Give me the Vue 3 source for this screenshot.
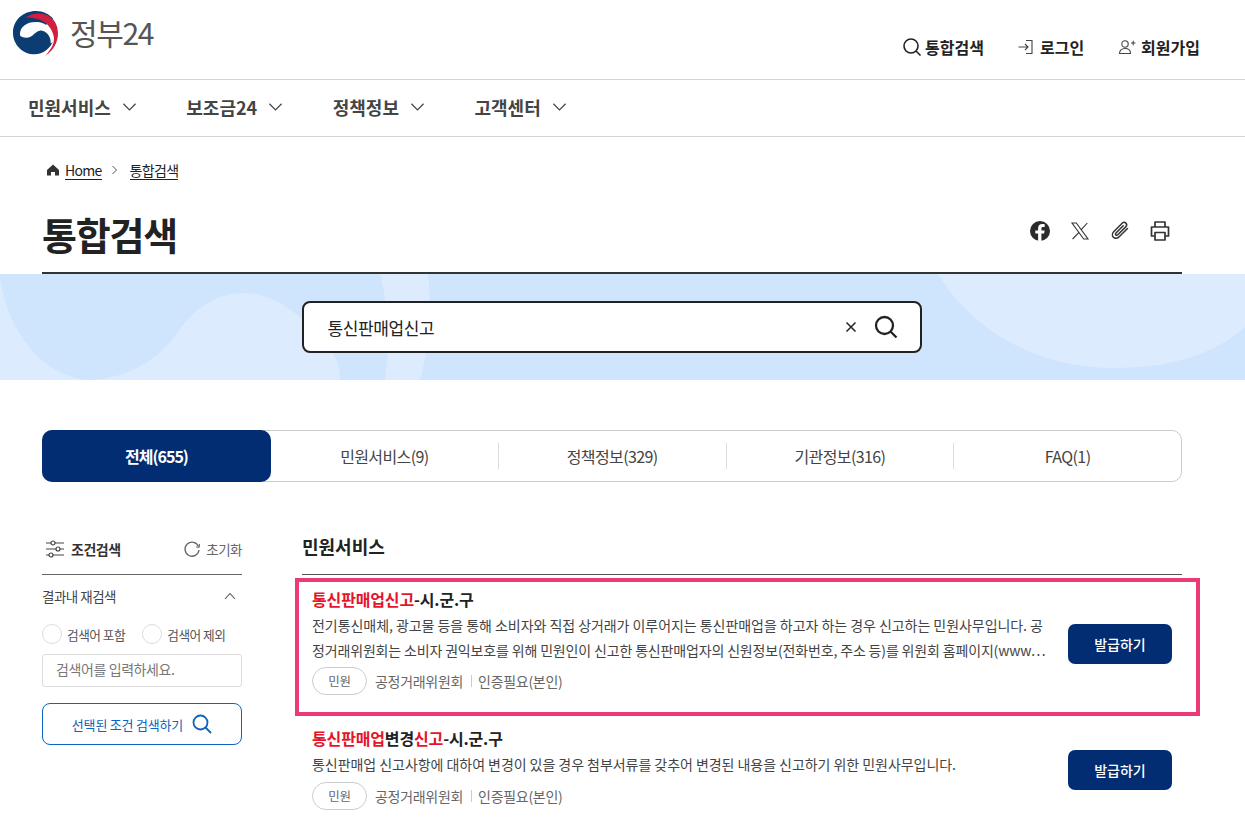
<script setup>
const navItems = ['민원서비스', '보조금24', '정책정보', '고객센터']
const tabs = ['전체(655)', '민원서비스(9)', '정책정보(329)', '기관정보(316)', 'FAQ(1)']
const results = [
  {
    id: 1,
    title: [['통신판매업신고', true], ['-시.군.구', false]],
    lines: [
      '전기통신매체, 광고물 등을 통해 소비자와 직접 상거래가 이루어지는 통신판매업을 하고자 하는 경우 신고하는 민원사무입니다. 공',
      '정거래위원회는 소비자 권익보호를 위해 민원인이 신고한 통신판매업자의 신원정보(전화번호, 주소 등)를 위원회 홈페이지(www…'
    ],
    picked: true
  },
  {
    id: 2,
    title: [['통신판매업', true], ['변경', false], ['신고', true], ['-시.군.구', false]],
    lines: ['통신판매업 신고사항에 대하여 변경이 있을 경우 첨부서류를 갖추어 변경된 내용을 신고하기 위한 민원사무입니다.'],
    picked: false
  }
]
</script>

<template>
  <div class="page">
    <header class="top">
      <div class="logo">
        <svg class="mark" viewBox="0 0 180 162" width="60" height="54">
          <path d="M15 80C15 42 46 15 84 15c21 0 41 10 51 23l-25 22 28 40c-10 28-33 45-58 45-36 0-65-29-65-65z" fill="#0b3d72"/>
          <path d="M36 88C34 60 60 46 88 48c30 2 50 27 50 54-2 6-6 10-10 10 2-22-16-40-33-38-15 2-20 21-40 21-10 0-17-3-19-7z" fill="#fff"/>
          <path d="M52 35C85 10 150 20 150 82c0 28-15 53-38 67 16-19 27-34 26-54-4-30-28-53-53-57-13-2-23-4-33-3z" fill="#d1203f"/>
        </svg>
        <span class="logo-text">정부24</span>
      </div>
      <nav class="util">
        <a class="util-link">
          <svg width="20" height="20" viewBox="0 0 20 20" fill="none" stroke="#222" stroke-width="1.600"><circle cx="9" cy="9" r="7"/><path d="M14 14l4.500 4.500"/></svg>
          <span>통합검색</span>
        </a>
        <a class="util-link login">
          <svg width="18" height="18" viewBox="0 0 18 18" fill="none" stroke="#444" stroke-width="1.100"><path d="M9 2.500h6v13H9M1.500 9H11M8 6l3 3-3 3"/></svg>
          <span>로그인</span>
        </a>
        <a class="util-link join">
          <svg width="18" height="18" viewBox="0 0 18 18" fill="none" stroke="#444" stroke-width="1.100"><circle cx="7" cy="6" r="3.200"/><path d="M1.500 15.500c0-3 2-5 5.500-5s5.500 2 5.500 5zM13 5h4.500M15.200 2.800v4.400"/></svg>
          <span>회원가입</span>
        </a>
      </nav>
    </header>

    <nav class="gnb">
      <a v-for="item in navItems" :key="item" class="gnb-item">
        <span>{{ item }}</span>
        <svg width="15" height="10" viewBox="0 0 16 10" fill="none" stroke="#444" stroke-width="1.300"><path d="M1.500 1.500L8 8l6.500-6.500"/></svg>
      </a>
    </nav>

    <div class="wrap">
      <div class="crumbs">
        <svg width="14" height="14" viewBox="0 0 14 14" fill="#333"><path d="M7 1.500L1 7v5.500h4V9h4v3.500h4V7z"/></svg>
        <a class="crumb">Home</a>
        <svg width="8" height="10" viewBox="0 0 8 10" fill="none" stroke="#555" stroke-width="1"><path d="M1.500 1l4 4-4 4"/></svg>
        <a class="crumb">통합검색</a>
      </div>
      <div class="head">
        <h1>통합검색</h1>
        <div class="share">
          <svg width="22" height="22" viewBox="0 0 22 22"><circle cx="11" cy="11" r="10" fill="#2b2b2b"/><path d="M12.400 21v-7.500h2.700l.5-3.100h-3.200V8.500c0-.9.400-1.600 1.700-1.600h1.600V4.200c-.8-.1-1.600-.2-2.400-.2-2.600 0-4.200 1.500-4.200 4.200v2.200H6.300v3.100h2.800V21z" fill="#fff"/></svg>
          <svg width="22" height="20" viewBox="-1 0 22 20" fill="none" stroke="#333" stroke-width="1.100"><path d="M2 2h4.300l11.700 16h-4.300zM17.300 2l-6.500 7.200M9 11.300L2.600 18"/></svg>
          <svg width="22" height="22" viewBox="0 0 22 22" fill="none" stroke="#333" stroke-width="1.500" stroke-linecap="round"><path d="M18.500 8.500l-8.300 8.300c-1.700 1.700-4.300 2-5.800.5s-1.200-4.100.5-5.800l8-8c1.200-1.200 3-1.400 4-.4s.8 2.800-.4 4l-7.700 7.700c-.6.600-1.500.7-2 .2s-.4-1.400.2-2l7.200-7.200"/></svg>
          <svg width="22" height="22" viewBox="0 0 22 22" fill="none" stroke="#333" stroke-width="1.700" stroke-linejoin="round"><path d="M6 7V2h10v5M6 16H2.500V7h17v9H16"/><path d="M6 12.500h10V20H6z"/></svg>
        </div>
      </div>
    </div>

    <section class="banner">
      <svg class="banner-art" viewBox="0 0 1245 106" preserveAspectRatio="none">
        <path d="M0 0C4 50 40 104 90 106H0z" fill="#dcebfd"/>
        <path d="M90 106c40-2 70-21 90-51 15-20 35-36 65-36 35 0 65 31 85 56 10 13 10 25 10 31z" fill="#dcebfd"/>
        <path d="M380 0h48c4 30 0 80-8 106h-35c5-36 3-76-5-106z" fill="#dcebfd"/>
        <path d="M938 0c37 60 102 94 177 94 55 0 100-14 130-41V0z" fill="#dcebfd"/>
      </svg>
      <div class="searchbox">
        <span class="query">통신판매업신고</span>
        <svg class="clear" width="12" height="12" viewBox="0 0 12 12" fill="none" stroke="#222" stroke-width="1.500"><path d="M1.500 1.500l9 9M10.500 1.500l-9 9"/></svg>
        <svg width="24" height="24" viewBox="0 0 24 24" fill="none" stroke="#222" stroke-width="2.300"><circle cx="10.500" cy="10.500" r="8.500"/><path d="M16.500 16.500l6 6"/></svg>
      </div>
    </section>

    <div class="wrap">
      <div class="tabs">
        <a v-for="(t, i) in tabs" :key="t" class="tab" :class="{ on: i === 0 }"><span>{{ t }}</span></a>
      </div>

      <div class="columns">
        <aside class="side">
          <div class="side-head">
            <svg width="20" height="20" viewBox="0 0 20 20" fill="none" stroke="#444" stroke-width="1.200"><path d="M1 4h5M10 4h9M1 10h10M15 10h4M1 16h3M8 16h11"/><circle cx="8" cy="4" r="2"/><circle cx="13" cy="10" r="2"/><circle cx="6" cy="16" r="2"/></svg>
            <strong>조건검색</strong>
            <span class="reset">
              <svg width="18" height="18" viewBox="0 0 18 18" fill="none" stroke="#666" stroke-width="1.300"><path d="M15.500 6.500A7 7 0 1 0 16 10"/><path d="M13 7l3.300.3.200-3.300" stroke-width="1"/></svg>
              초기화
            </span>
          </div>
          <div class="re-head">
            <span>결과내 재검색</span>
            <svg width="12" height="8" viewBox="0 0 12 8" fill="none" stroke="#555" stroke-width="1.100"><path d="M1 7l5-5.500L11 7"/></svg>
          </div>
          <div class="radios">
            <label class="radio"><i></i>검색어 포함</label>
            <label class="radio"><i></i>검색어 제외</label>
          </div>
          <div class="field">검색어를 입력하세요.</div>
          <button class="apply">
            선택된 조건 검색하기
            <svg width="20" height="20" viewBox="0 0 20 20" fill="none" stroke="#0b64c0" stroke-width="1.800"><circle cx="8.500" cy="8.500" r="7"/><path d="M13.500 13.500l5.500 5.500"/></svg>
          </button>
        </aside>

        <main class="main">
          <h2>민원서비스</h2>
          <ul class="list">
            <li v-for="r in results" :key="r.id" class="item" :class="{ picked: r.picked }">
              <div class="body">
                <div class="title"><span v-for="(p, i) in r.title" :key="i" :class="{ hit: p[1] }">{{ p[0] }}</span></div>
                <div class="desc"><div v-for="l in r.lines" :key="l">{{ l }}</div></div>
                <div class="meta">
                  <span class="pill">민원</span>
                  <span>공정거래위원회</span>
                  <span class="sep">인증필요(본인)</span>
                </div>
              </div>
              <button class="issue">발급하기</button>
            </li>
          </ul>
        </main>
      </div>
    </div>
  </div>
</template>

<style>
html, body { margin: 0; background: #fff; }
</style>

<style scoped>
.page {
  height: 827px;
  overflow: hidden;
  font-family: "Noto Sans CJK KR", "Noto Sans", sans-serif;
  color: #222;
  letter-spacing: -0.5px;
}
.top {
  height: 79px;
  border-bottom: 1px solid #d4d4d4;
  display: flex;
  justify-content: space-between;
  padding: 0 45px 0 8px;
}
.logo { display: flex; align-items: center; gap: 2px; height: 66px; }
.mark { display: block; }
.logo-text { font-size: 30px; color: #555; letter-spacing: -1.4px; line-height: 1; margin-top: -3px; }
.util { display: flex; align-items: center; height: 94px; }
.util-link { display: flex; align-items: center; gap: 5px; font-size: 16px; font-weight: 700; color: #222; letter-spacing: 0; }
.util-link:first-child { gap: 3px; }
.login { margin-left: 33px; }
.join { margin-left: 34px; }
.gnb {
  height: 57px;
  box-sizing: border-box;
  border-bottom: 1px solid #d4d4d4;
  padding: 0 0 2px 28px;
  display: flex;
  gap: 49.500px;
  align-items: center;
}
.gnb-item { display: flex; align-items: center; gap: 11px; font-size: 18px; font-weight: 700; color: #444; letter-spacing: 0; }
.wrap { margin: 0 63px 0 42px; }
.crumbs { display: flex; align-items: center; gap: 5px; height: 24px; margin: 21px 0 0 4px; font-size: 14px; letter-spacing: -0.7px; }
.crumb { border-bottom: 1px solid #222; line-height: 18px; margin-right: 4px; }
.crumbs svg:nth-of-type(2) { margin-right: 6px; }
.head { display: flex; justify-content: space-between; align-items: center; height: 77px; padding-top: 13px; border-bottom: 2px solid #333; }
h1 { margin: 0; font-size: 38px; font-weight: 700; letter-spacing: -1.2px; color: #222; }
.share { display: flex; align-items: center; gap: 18px; margin-right: 11px; margin-top: -6px; }
.banner {
  position: relative;
  height: 106px;
  background: #cfe5fe;
  display: flex;
  justify-content: center;
  align-items: flex-start;
  overflow: hidden;
}
.banner-art { position: absolute; inset: 0; width: 100%; height: 100%; }
.searchbox {
  position: relative;
  width: 620px;
  height: 52px;
  margin-top: 27px;
  margin-left: -22px;
  box-sizing: border-box;
  background: #fff;
  border: 2px solid #222;
  border-radius: 8px;
  display: flex;
  align-items: center;
  padding: 0 22px 0 24px;
}
.query { flex: 1; font-size: 17px; letter-spacing: -0.4px; }
.clear { margin-right: 17px; }
.tabs {
  margin-top: 50px;
  height: 52px;
  box-sizing: border-box;
  border: 1px solid #ccc;
  border-radius: 10px;
  display: flex;
  align-items: center;
}
.tab { flex: 1; font-size: 16px; color: #444; text-align: center; position: relative; height: 26px; line-height: 26px; letter-spacing: -0.6px; }
.tab + .tab { border-left: 1px solid #ddd; }
.tab:nth-child(2) { border-left: 0; }
.tab.on {
  flex: none;
  width: 229px;
  margin: -1px 0 -1px -1px;
  height: 52px;
  line-height: 52px;
  background: #032d73;
  color: #fff;
  font-weight: 700;
  border-radius: 10px;
  letter-spacing: -1px;
}
.columns { display: flex; gap: 60px; margin-top: 48px; }
.side { width: 200px; flex: none; }
.side-head { display: flex; align-items: center; height: 37px; border-bottom: 1px solid #666; padding: 0 0 7px 3px; gap: 6px; }
.side-head strong { font-size: 14px; font-weight: 700; color: #333; }
.reset { margin-left: auto; display: flex; align-items: center; gap: 5px; font-size: 13.500px; color: #666; }
.re-head { display: flex; justify-content: space-between; align-items: center; margin-top: 11px; font-size: 13.500px; color: #444; padding-right: 6px; }
.radios { display: flex; gap: 17px; margin-top: 18px; }
.radio { display: flex; align-items: center; gap: 5px; font-size: 12.700px; color: #555; }
.radio i { width: 20px; height: 20px; box-sizing: border-box; border: 1px solid #ddd; border-radius: 50%; }
.field { margin-top: 10px; height: 33px; box-sizing: border-box; border: 1px solid #ddd; border-radius: 3px; padding-left: 13px; line-height: 29px; font-size: 14px; letter-spacing: -0.4px; color: #777; }
.apply {
  margin-top: 16px;
  width: 200px;
  height: 42px;
  background: #fff;
  border: 1px solid #0b64c0;
  border-radius: 8px;
  display: flex;
  align-items: center;
  justify-content: center;
  gap: 9px;
  font-family: inherit;
  font-size: 13px;
  letter-spacing: -0.2px;
  color: #0b64c0;
}
.main { flex: 1; min-width: 0; }
h2 { margin: 0; height: 45px; box-sizing: border-box; border-bottom: 1px solid #555; font-size: 18px; font-weight: 700; line-height: 32px; color: #222; letter-spacing: 0; }
.list { list-style: none; margin: 3px 0 0; padding: 0; }
.item { position: relative; display: flex; align-items: flex-start; padding: 10px 10px 12px; gap: 16px; }
.item.picked { height: 138px; box-sizing: border-box; margin: 0 -18px 0 -7px; padding: 5px 24px 12px 13px; border: 4px solid #ec3a78; }
.body { width: 740px; flex: none; }
.title { font-size: 16px; font-weight: 700; color: #222; line-height: 24px; letter-spacing: -0.15px; }
.hit { color: #e3152b; }
.desc { margin-top: 2px; font-size: 14px; line-height: 25px; color: #444; white-space: nowrap; letter-spacing: -0.05px; }
.desc div:nth-child(2) { letter-spacing: -0.16px; }
.meta { display: flex; align-items: center; font-size: 14px; color: #666; margin-top: 5px; letter-spacing: -0.3px; }
.picked .meta { margin-top: 4px; }
.pill { width: 55px; height: 28px; box-sizing: border-box; border: 1px solid #ccc; border-radius: 14px; text-align: center; line-height: 26px; font-size: 12.500px; margin-right: 8px; }
.sep { margin-left: 8px; padding-left: 7px; position: relative; }
.sep::before { content: ""; position: absolute; left: 0; top: 4px; bottom: 4px; width: 1px; background: #ccc; }
.issue {
  width: 104px;
  height: 40px;
  flex: none;
  align-self: center;
  margin-top: 4px;
  background: #032d73;
  color: #fff;
  border: 0;
  border-radius: 7px;
  font-family: inherit;
  font-size: 14px;
  font-weight: 500;
}
.picked .issue { margin-top: 0; }
</style>
